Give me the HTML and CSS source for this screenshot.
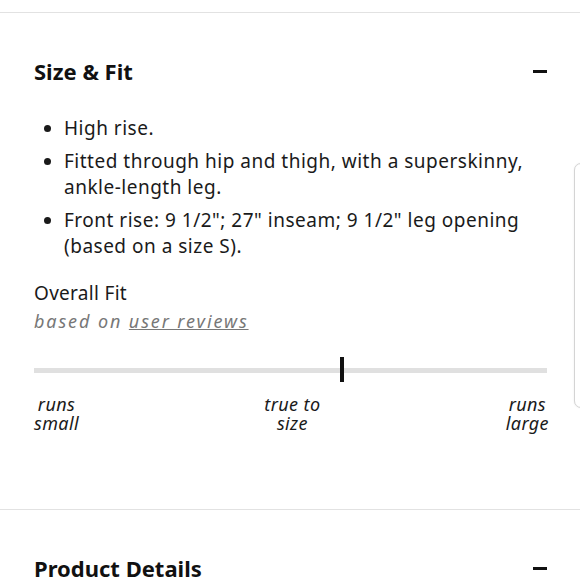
FILE: index.html
```html
<!DOCTYPE html>
<html>
<head>
<meta charset="utf-8">
<link rel="stylesheet" href="styles.css">
</head>
<body>
<div class="page">
  <section class="acc">
    <div class="acc-head">
      <h2 class="acc-title">Size &amp; Fit</h2>
      <span class="minus"></span>
    </div>
    <ul class="bullets">
      <li>High rise.</li>
      <li>Fitted through hip and thigh, with a superskinny, ankle-length leg.</li>
      <li>Front rise: 9 1/2"; 27" inseam; 9 1/2" leg opening (based on a size S).</li>
    </ul>
    <div class="fit">
      <div class="fit-title">Overall Fit</div>
      <div class="fit-sub">based on <a class="fit-link" href="#">user reviews</a></div>
      <div class="track">
        <span class="marker" style="left: 60%"></span>
      </div>
      <div class="labels">
        <span class="lbl">runs<br>small</span>
        <span class="lbl">true to<br>size</span>
        <span class="lbl">runs<br>large</span>
      </div>
    </div>
  </section>
  <section class="acc">
    <div class="acc-head">
      <h2 class="acc-title">Product Details</h2>
      <span class="minus"></span>
    </div>
  </section>
  <div class="side-tab"></div>
</div>
</body>
</html>
```

FILE: styles.css
```css
html, body {
  margin: 0;
  padding: 0;
  background: #fff;
}
body {
  font-family: "Noto Sans", "Lato", sans-serif;
  color: #1a1a1a;
  width: 580px;
  height: 579px;
  overflow: hidden;
}
.page {
  padding-top: 12px;
}
.acc {
  border-top: 1px solid #e2e2e2;
  padding: 0 33px 0 34px;
}
.acc-head {
  display: flex;
  align-items: center;
  justify-content: space-between;
  padding-top: 45px;
  height: 26px;
}
.acc-title {
  margin: 0;
  font-size: 22px;
  font-weight: 700;
  line-height: 26px;
  color: #111;
}
.minus {
  width: 14px;
  height: 3px;
  background: #111;
  display: block;
}
.bullets {
  margin: 31px 0 0 0;
  padding: 0 0 0 30px;
  font-size: 19px;
  line-height: 26px;
  letter-spacing: 0.5px;
}
.bullets li {
  margin-bottom: 7px;
}
.fit {
  margin-top: 21px;
  padding-bottom: 76px;
}
.fit-title {
  font-size: 19px;
  line-height: 26px;
  letter-spacing: 0.3px;
}
.fit-sub {
  font-size: 18px;
  font-style: italic;
  color: #777;
  letter-spacing: 1.9px;
  line-height: 28px;
  margin-top: 1px;
}
.fit-link {
  color: #777;
  text-decoration: underline;
}
.track {
  position: relative;
  height: 5px;
  background: #e0e0e0;
  margin-top: 33px;
}
.marker {
  position: absolute;
  top: -11px;
  width: 4px;
  height: 25px;
  margin-left: -2px;
  background: #111;
}
.labels {
  display: flex;
  justify-content: space-between;
  margin-top: 22px;
  margin-right: -2px;
}
.lbl {
  font-size: 18px;
  font-style: italic;
  line-height: 19px;
  text-align: center;
  letter-spacing: 0.4px;
}
.side-tab {
  position: absolute;
  left: 574px;
  top: 163px;
  width: 30px;
  height: 243px;
  border: 1px solid #d4d4d4;
  border-radius: 7px;
  background: #fff;
  box-shadow: 0 0 2px rgba(0,0,0,0.08);
}
```
